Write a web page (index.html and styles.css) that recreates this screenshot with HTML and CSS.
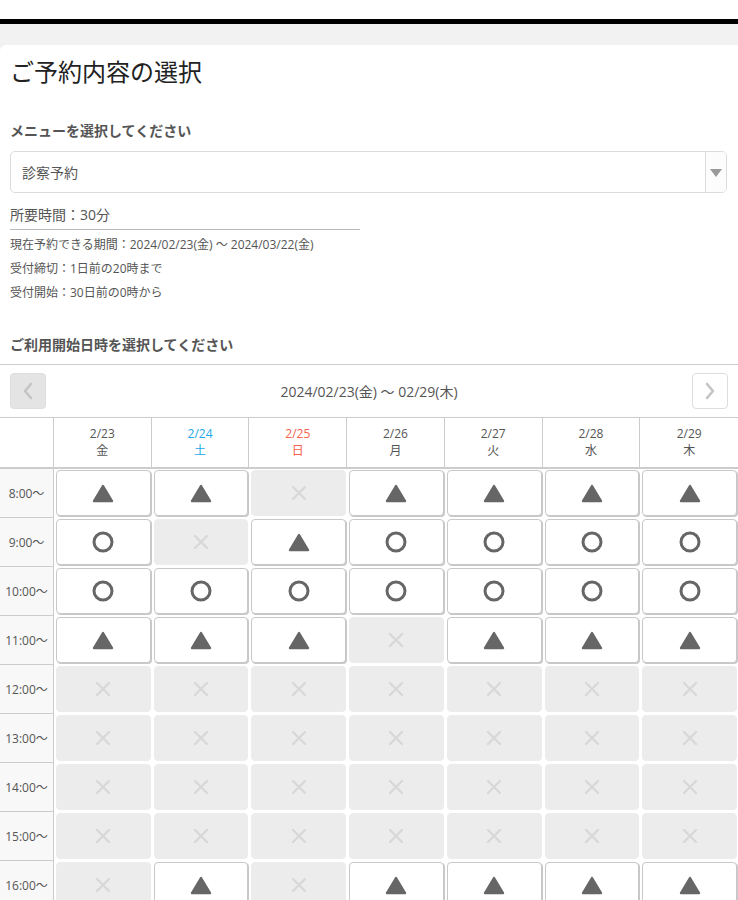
FILE: index.html
```html
<!DOCTYPE html>
<html lang="ja">
<head>
<meta charset="utf-8">
<title>ご予約内容の選択</title>
<link rel="stylesheet" href="styles.css">
</head>
<body>
<svg class="defs" width="0" height="0" aria-hidden="true">
  <defs>
    <symbol id="tri" viewBox="0 0 22 19"><polygon points="11,2 20,17 2,17" fill="#666" stroke="#666" stroke-width="2.4" stroke-linejoin="round"/></symbol>
    <symbol id="cir" viewBox="0 0 22 22"><circle cx="11" cy="11" r="9" fill="none" stroke="#666" stroke-width="3"/></symbol>
    <symbol id="crs" viewBox="0 0 16 16"><path d="M2 2 L14 14 M14 2 L2 14" stroke="#d8d8d8" stroke-width="2.4" stroke-linecap="round"/></symbol>
  </defs>
</svg>
<div class="page">
  <div class="panel">
    <h1 class="title">ご予約内容の選択</h1>
    <div class="inner">
      <div class="label">メニューを選択してください</div>
      <div class="select">
        <span class="select-text">診察予約</span>
        <span class="select-arrow"><span class="tri-down"></span></span>
      </div>
      <div class="duration">所要時間：30分</div>
      <div class="info">
        <div>現在予約できる期間：2024/02/23(金) ～ 2024/03/22(金)</div>
        <div>受付締切：1日前の20時まで</div>
        <div>受付開始：30日前の0時から</div>
      </div>
      <div class="label label2">ご利用開始日時を選択してください</div>
    </div>
    <div class="nav">
      <span class="navbtn prev"><svg width="10" height="18" viewBox="0 0 10 18"><path d="M8 2 L2 9 L8 16" fill="none" stroke="#c4c4c4" stroke-width="2.6" stroke-linecap="round" stroke-linejoin="round"/></svg></span>
      <span class="range">2024/02/23(金) ～ 02/29(木)</span>
      <span class="navbtn next"><svg width="10" height="18" viewBox="0 0 10 18"><path d="M2 2 L8 9 L2 16" fill="none" stroke="#c4c4c4" stroke-width="2.6" stroke-linecap="round" stroke-linejoin="round"/></svg></span>
    </div>
    <div class="cal">
      <div class="hcell corner"></div>
      <div class="hcell"><div>2/23</div><div>金</div></div>
      <div class="hcell sat"><div>2/24</div><div>土</div></div>
      <div class="hcell sun"><div>2/25</div><div>日</div></div>
      <div class="hcell"><div>2/26</div><div>月</div></div>
      <div class="hcell"><div>2/27</div><div>火</div></div>
      <div class="hcell"><div>2/28</div><div>水</div></div>
      <div class="hcell last"><div>2/29</div><div>木</div></div>
    </div>
    <div class="cal body" id="calbody"></div>
  </div>
</div>
<script src="app.js"></script>
</body>
</html>
```

FILE: app.js
```js
var rows = [
  ["8:00～",  "ttxtttt"],
  ["9:00～",  "cxtcccc"],
  ["10:00～", "ccccccc"],
  ["11:00～", "tttxttt"],
  ["12:00～", "xxxxxxx"],
  ["13:00～", "xxxxxxx"],
  ["14:00～", "xxxxxxx"],
  ["15:00～", "xxxxxxx"],
  ["16:00～", "xtxtttt"]
];
var html = "";
rows.forEach(function (r) {
  html += '<div class="time">' + r[0] + '</div>';
  r[1].split("").forEach(function (s) {
    if (s === "x") {
      html += '<div class="slot"><span class="btn off"><svg width="16" height="16"><use href="#crs"/></svg></span></div>';
    } else if (s === "t") {
      html += '<div class="slot"><span class="btn"><svg width="22" height="19"><use href="#tri"/></svg></span></div>';
    } else {
      html += '<div class="slot"><span class="btn"><svg width="22" height="22"><use href="#cir"/></svg></span></div>';
    }
  });
});
document.getElementById("calbody").innerHTML = html;
```

FILE: styles.css
```css
* { box-sizing: border-box; }
html, body { margin: 0; padding: 0; background: #fff; }
body {
  width: 738px;
  font-family: "Open Sans", "Noto Sans CJK JP", sans-serif;
  color: #555;
}
.defs { position: absolute; width: 0; height: 0; overflow: hidden; }
.page {
  margin-top: 19px;
  border-top: 5px solid #000;
  background: #f2f2f2;
  padding-top: 21px;
}
.panel {
  background: #fff;
  border-radius: 6px 0 0 0;
  padding-top: 10px;
  overflow: hidden;
}
.title {
  margin: 0;
  padding: 0 10px;
  font-size: 24px;
  line-height: 34px;
  font-weight: normal;
  color: #222;
}
.inner { padding: 0 11px 0 10px; }
.label {
  margin-top: 32px;
  font-size: 14px;
  line-height: 20px;
  font-weight: bold;
  color: #555;
}
.select {
  margin-top: 10px;
  height: 42px;
  border: 1px solid #dcdcdc;
  border-radius: 5px;
  display: flex;
  align-items: center;
  overflow: hidden;
}
.select-text {
  flex: 1;
  padding-left: 11px;
  font-size: 14px;
  color: #555;
}
.select-arrow {
  width: 21px;
  height: 100%;
  border-left: 1px solid #dcdcdc;
  background: #fcfcfc;
  display: flex;
  align-items: center;
  justify-content: center;
}
.tri-down {
  width: 0; height: 0;
  border-left: 6px solid transparent;
  border-right: 6px solid transparent;
  border-top: 8px solid #999;
  margin-top: 2px;
}
.duration {
  margin-top: 12px;
  width: 350px;
  font-size: 14px;
  line-height: 20px;
  padding-bottom: 4px;
  border-bottom: 1px solid #bbb;
  color: #555;
}
.info {
  margin-top: 3px;
  font-size: 12px;
  line-height: 24px;
  color: #555;
}
.label2 { margin-top: 30px; padding-bottom: 9px; }
.nav {
  border-top: 1px solid #ccc;
  border-bottom: 1px solid #ccc;
  height: 54px;
  padding: 0 10px 0 10px;
  display: flex;
  align-items: center;
  justify-content: space-between;
}
.navbtn {
  width: 36px;
  height: 36px;
  border: 1px solid #ddd;
  border-radius: 4px;
  display: flex;
  align-items: center;
  justify-content: center;
}
.prev { background: #e4e4e4; }
.next { background: #fff; }
.range { font-size: 14px; color: #555; }
.cal {
  display: grid;
  grid-template-columns: 54px repeat(7, 1fr);
}
.hcell {
  height: 51px;
  border-right: 1px solid #ccc;
  border-bottom: 2px solid #ccc;
  font-size: 12px;
  line-height: 17px;
  color: #555;
  text-align: center;
  padding-top: 7px;
}
.hcell.last { border-right: none; }
.sat { color: #1ea8e8; }
.sun { color: #f8614e; }
.time {
  height: 49px;
  background: #f8f8f8;
  border-right: 1px solid #ccc;
  border-bottom: 1px solid #ccc;
  font-size: 12px;
  color: #555;
  display: flex;
  align-items: center;
  justify-content: center;
}
.slot {
  height: 49px;
  padding: 1px 1px 2px 2px;
}
.btn {
  display: flex;
  width: 100%;
  height: 46px;
  align-items: center;
  justify-content: center;
  background: #fff;
  border: 1px solid #c8c8c8;
  border-radius: 4px;
  box-shadow: 1px 1px 0 #c8c8c8;
}
.btn.off {
  background: #ececec;
  border-color: #ececec;
  box-shadow: none;
}
```
